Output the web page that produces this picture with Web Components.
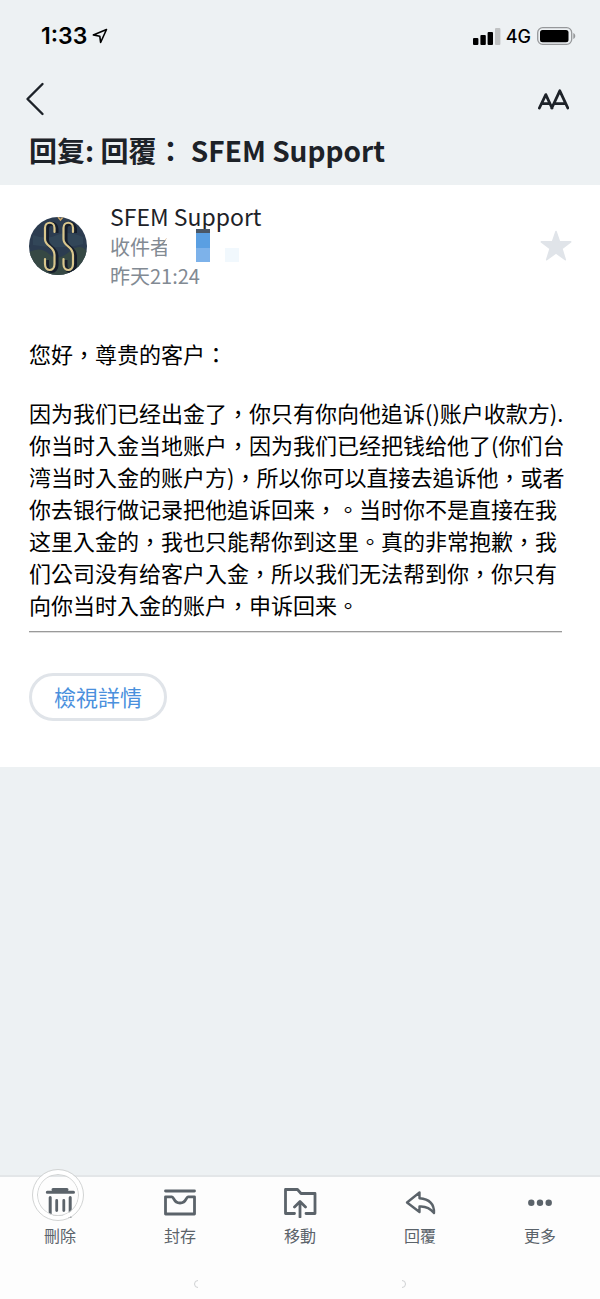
<!DOCTYPE html>
<html lang="zh-Hant">
<head>
<meta charset="UTF-8">
<meta name="viewport" content="width=device-width, initial-scale=1">
<title>SFEM Support</title>
<style>
    body {
        margin: 0;
        font-family: "Noto Sans CJK TC", sans-serif;
        color: #1d2228;
        background: #edf1f3;
    }
</style>
</head>
<body>

<mail-screen>
    <status-bar slot="top" time="1:33" network="4G"></status-bar>
    <mail-header slot="top">回复: 回覆： SFEM Support</mail-header>
    <mail-message>
        <sender-info slot="sender" name="SFEM Support" to="收件者" date="昨天21:24"></sender-info>
        <p>您好，尊贵的客户：</p>
        <p>因为我们已经出金了，你只有你向他追诉()账户收款方).你当时入金当地账户，因为我们已经把钱给他了(你们台湾当时入金的账户方)，所以你可以直接去追诉他，或者你去银行做记录把他追诉回来，。当时你不是直接在我这里入金的，我也只能帮你到这里。真的非常抱歉，我们公司没有给客户入金，所以我们无法帮到你，你只有向你当时入金的账户，申诉回来。</p>
    </mail-message>
    <mail-toolbar slot="bottom">
        <tool-button icon="trash" touched>刪除</tool-button>
        <tool-button icon="archive">封存</tool-button>
        <tool-button icon="move">移動</tool-button>
        <tool-button icon="reply">回覆</tool-button>
        <tool-button icon="more">更多</tool-button>
    </mail-toolbar>
</mail-screen>

<script>
// Page frame: header on top, message, toolbar at the bottom
class MailScreen extends HTMLElement {
    constructor() {
        super();
        this.attachShadow({ mode: 'open' }).innerHTML = `
            <style>
                :host {
                    display: flex;
                    flex-direction: column;
                    min-height: 100vh;
                }
                main { flex: 1; }
            </style>
            <header><slot name="top"></slot></header>
            <main><slot></slot></main>
            <footer><slot name="bottom"></slot></footer>
        `;
    }
}

class StatusBar extends HTMLElement {
    constructor() {
        super();
        this.attachShadow({ mode: 'open' });
    }

    connectedCallback() {
        this.shadowRoot.innerHTML = `
            <style>
                :host {
                    display: flex;
                    justify-content: space-between;
                    align-items: center;
                    height: 72px;
                    padding: 0 24px 0 41px;
                    color: #000;
                    font-family: Inter, sans-serif;
                }
                div {
                    display: flex;
                    align-items: center;
                    gap: 5px;
                }
                .time { font-size: 23px; font-weight: 600; }
                .network { font-size: 18px; font-weight: 500; }
                svg { display: block; }
            </style>
            <div>
                <span class="time">${this.getAttribute('time')}</span>
                <svg width="16" height="16" viewBox="0 0 16 16" fill="none" stroke="#000" stroke-width="1.6" stroke-linejoin="round">
                    <path d="M14.5 1.5 1.3 6.9l6.5 1.3 .8 6.3z"/>
                </svg>
            </div>
            <div>
                <svg width="28" height="17" viewBox="0 0 28 17">
                    <rect x="0" y="10" width="5.4" height="7" rx="1"/>
                    <rect x="7.4" y="7" width="5.4" height="10" rx="1"/>
                    <rect x="14.6" y="4" width="5.4" height="13" rx="1"/>
                    <rect x="22" y="0" width="5.4" height="17" rx="1" fill="#c0c2c3"/>
                </svg>
                <span class="network">${this.getAttribute('network')}</span>
                <svg width="40" height="20" viewBox="0 0 40 20">
                    <rect x="1.7" y="1.7" width="34" height="16.6" rx="5" fill="none" stroke="#96989a" stroke-width="1.3"/>
                    <rect x="4" y="4" width="28.5" height="12.2" rx="2.5"/>
                    <path d="M37.3 7v6c2.6-1 2.6-5 0-6z" fill="#96989a"/>
                </svg>
            </div>
        `;
    }
}

class MailHeader extends HTMLElement {
    constructor() {
        super();
        this.attachShadow({ mode: 'open' }).innerHTML = `
            <style>
                :host {
                    display: block;
                    padding: 5px 31px 14px 20px;
                }
                nav {
                    display: flex;
                    justify-content: space-between;
                    align-items: center;
                    height: 44px;
                }
                button {
                    display: flex;
                    padding: 0;
                    border: 0;
                    background: none;
                    color: inherit;
                }
                h1 {
                    margin: 8px 0 0 9px;
                    font-size: 28px;
                    line-height: 42px;
                    font-weight: 700;
                    text-spacing-trim: space-all;
                }
            </style>
            <nav>
                <button aria-label="返回">
                    <svg width="32" height="36" viewBox="0 0 32 36" fill="none" stroke="currentColor" stroke-width="2.4" stroke-linecap="round" stroke-linejoin="round">
                        <path d="M22.5 3 7.5 18l15 15"/>
                    </svg>
                </button>
                <button aria-label="文字大小">
                    <svg width="34" height="22" viewBox="0 0 34 22" fill="none" stroke="currentColor" stroke-width="2.8" stroke-linecap="round" stroke-linejoin="round">
                        <path d="M4.4 20 10.8 6.6l6.2 13.4M7 15.7h8M16.8 20 24.8 2.8l8 17.2M19.7 15.7h10.5"/>
                    </svg>
                </button>
            </nav>
            <h1><slot></slot></h1>
        `;
    }
}

class SenderInfo extends HTMLElement {
    constructor() {
        super();
        this.attachShadow({ mode: 'open' });
    }

    connectedCallback() {
        this.shadowRoot.innerHTML = `
            <style>
                :host {
                    display: flex;
                    align-items: center;
                    gap: 23px;
                }
                .avatar { flex: none; }
                .lines { flex: 1; }
                .name { font-size: 23px; line-height: 31px; }
                .meta {
                    display: flex;
                    font-size: 20px;
                    line-height: 29px;
                    color: #828a93;
                }
                .to { position: relative; }
                /* Recipient name is masked out */
                .mask {
                    position: absolute;
                    left: 51px;
                    top: -3px;
                }
                .star {
                    padding: 0;
                    border: 0;
                    background: none;
                }
                svg { display: block; }
            </style>
            <svg class="avatar" width="58" height="58" viewBox="0 0 58 58" role="img" aria-label="SS">
                <defs><clipPath id="round"><circle cx="29" cy="29" r="29"/></clipPath></defs>
                <g clip-path="url(#round)">
                    <rect width="58" height="58" fill="#2c3c50"/>
                    <path d="M0 35q12-6 20 2t20-2 18 0v23H0z" fill="#364844"/>
                    <path d="M4 18q14 5 24 0t26 2v7q-20 6-50 1z" fill="#324658"/>
                    <g fill="none" stroke="#151d2b" stroke-width="4" transform="translate(2 1)">
                        <path d="M25.5 15V11c0-7-9.5-7-9.5 0v11c0 8 9.5 7 9.5 16v9c0 8-9.5 8-9.500 0v-5"/>
                        <path d="M44 15V11c0-7-9.5-7-9.5 0v11c0 8 9.5 7 9.5 16v9c0 8-9.5 8-9.500 0v-5"/>
                    </g>
                    <g fill="none" stroke="#d9c68d" stroke-width="2.2" stroke-linecap="round">
                        <path d="M25.5 15V11c0-7-9.5-7-9.5 0v11c0 8 9.5 7 9.5 16v9c0 8-9.5 8-9.500 0v-5"/>
                        <path d="M44 15V11c0-7-9.5-7-9.5 0v11c0 8 9.5 7 9.5 16v9c0 8-9.5 8-9.500 0v-5"/>
                    </g>
                    <path d="M29 0l2.5 3L34 0" fill="none" stroke="#c9a66a" stroke-width="1.6"/>
                </g>
            </svg>
            <div class="lines">
                <div class="name">${this.getAttribute('name')}</div>
                <div class="meta">
                    <span class="to">${this.getAttribute('to')}
                        <svg class="mask" width="84" height="34" viewBox="0 0 84 34">
                            <path d="M8 4 3 15h3v17h26V4z" fill="#fff"/>
                            <path d="M35 0h14v4H35z" fill="#4a5766"/>
                            <path d="M35 4h14v15H35z" fill="#5a9fe2"/>
                            <path d="M35 19h14v14H35z" fill="#7db2ea"/>
                            <path d="M64 19h14v14H64z" fill="#f1f8fd"/>
                        </svg>
                    </span>
                </div>
                <div class="meta">${this.getAttribute('date')}</div>
            </div>
            <button class="star" aria-label="加星號">
                <svg width="34" height="34" viewBox="0 0 34 34" fill="#e0e4e9" stroke="#e0e4e9" stroke-width="1.6" stroke-linejoin="round">
                    <path d="M17 2.5l3.6 10.4h11.1l-8.9 6.7 3.5 11.1-9.3-6.8-9.3 6.8 3.5-11.1L2.3 12.9h11.1z"/>
                </svg>
            </button>
        `;
    }
}

class MailMessage extends HTMLElement {
    constructor() {
        super();
        this.attachShadow({ mode: 'open' }).innerHTML = `
            <style>
                :host {
                    display: block;
                    padding: 16px 27px 46px 29px;
                    background: #fff;
                }
                article {
                    margin: 47px 5px 40px 0;
                    color: #000;
                    font-size: 22px;
                    line-height: 32px;
                    text-spacing-trim: space-all;
                }
                ::slotted(p) { margin: 0 0 27px; }
                ::slotted(p:last-of-type) { margin: 0; }
                hr {
                    margin: 11px 6px 0 0;
                    border: 0;
                    border-top: 1px solid #9a9a9a;
                    border-bottom: 1px solid #dedede;
                }
                .details {
                    padding: 3px 22px 5px;
                    border: 3px solid #e0e4e9;
                    border-radius: 24px;
                    background: #fff;
                    color: #4a90dd;
                    font: inherit;
                    font-size: 22px;
                    line-height: 34px;
                }
            </style>
            <slot name="sender"></slot>
            <article>
                <slot></slot>
                <hr>
            </article>
            <button class="details">檢視詳情</button>
        `;
    }
}

class MailToolbar extends HTMLElement {
    constructor() {
        super();
        this.attachShadow({ mode: 'open' }).innerHTML = `
            <style>
                :host {
                    display: block;
                    border-top: 2px solid #e3e6e8;
                    background: #fdfdfd;
                }
                nav { display: flex; padding-top: 5px; }
                ::slotted(*) { flex: 1; }
                .home {
                    display: flex;
                    justify-content: space-between;
                    width: 36%;
                    margin: 0 auto;
                    padding: 32px 0 10px;
                }
            </style>
            <nav><slot></slot></nav>
            <div class="home">
                <svg width="8" height="10" viewBox="0 0 8 10" fill="none" stroke="#cfd1d3"><path d="M6 1.5a3.5 3.5 0 1 0 0 7"/></svg>
                <svg width="8" height="10" viewBox="0 0 8 10" fill="none" stroke="#cfd1d3"><path d="M2 1.5a3.5 3.5 0 1 1 0 7"/></svg>
            </div>
        `;
    }
}

// 36x36 line icons, drawn in the button's text colour
const ICONS = {
    trash: `
        <path d="M5.3 10.3h26.2M11 7.6h14" stroke-width="3"/>
        <path d="M8.2 15.5v19h20v-19" stroke-width="3"/>
        <path d="M14.7 18.5v10M21.8 18.5v10"/>`,
    archive: `
        <path d="M3.5 9h29"/>
        <path d="M3.5 14.8h6.5c2 0 1.5 6.2 8 6.2s6-6.2 8-6.2h6.5v17.2h-29z"/>`,
    move: `
        <path d="M12.5 31.5H3.5V7.5h12l3.5 4h14v20h-9"/>
        <path d="M18 35V20M12.5 25 18 19.5l5.5 5.5"/>`,
    reply: `
        <path d="M17.5 10.5 5 20.5l12.5 9.5v-5.5c6-.5 10.5 1.5 14.5 6.5 .3-8.5-4-14-14.5-14.8z" stroke-width="2.4"/>`,
    more: `
        <g fill="currentColor" stroke="none"><circle cx="9.3" cy="20.8" r="3.2"/><circle cx="18" cy="20.8" r="3.2"/><circle cx="26.7" cy="20.8" r="3.2"/></g>`
};

class ToolButton extends HTMLElement {
    constructor() {
        super();
        this.attachShadow({ mode: 'open' });
    }

    connectedCallback() {
        const touch = this.hasAttribute('touched') ? '<span class="touch"></span>' : '';
        this.shadowRoot.innerHTML = `
            <style>
                :host { display: flex; justify-content: center; }
                button {
                    position: relative;
                    display: flex;
                    flex-direction: column;
                    align-items: center;
                    padding: 0;
                    border: 0;
                    background: none;
                    color: #5b636a;
                    font-family: inherit;
                    font-size: 16px;
                    line-height: 24px;
                    font-weight: 400;
                }
                svg { display: block; margin-bottom: 5px; }
                .touch {
                    position: absolute;
                    left: -9px;
                    top: -12px;
                    box-sizing: border-box;
                    width: 50px;
                    height: 50px;
                    border: 4px solid #fff;
                    border-radius: 50%;
                    outline: 1px solid #d2d4d4;
                    box-shadow: inset 0 0 0 1px #d2d4d4;
                }
            </style>
            <button>
                <svg width="36" height="36" viewBox="0 0 36 36" fill="none" stroke="currentColor" stroke-width="2.8" stroke-linecap="round" stroke-linejoin="round">${ICONS[this.getAttribute('icon')]}</svg>
                ${touch}
                <slot></slot>
            </button>
        `;
    }
}

customElements.define('mail-screen', MailScreen);
customElements.define('status-bar', StatusBar);
customElements.define('mail-header', MailHeader);
customElements.define('sender-info', SenderInfo);
customElements.define('mail-message', MailMessage);
customElements.define('mail-toolbar', MailToolbar);
customElements.define('tool-button', ToolButton);
</script>
</body>
</html>
